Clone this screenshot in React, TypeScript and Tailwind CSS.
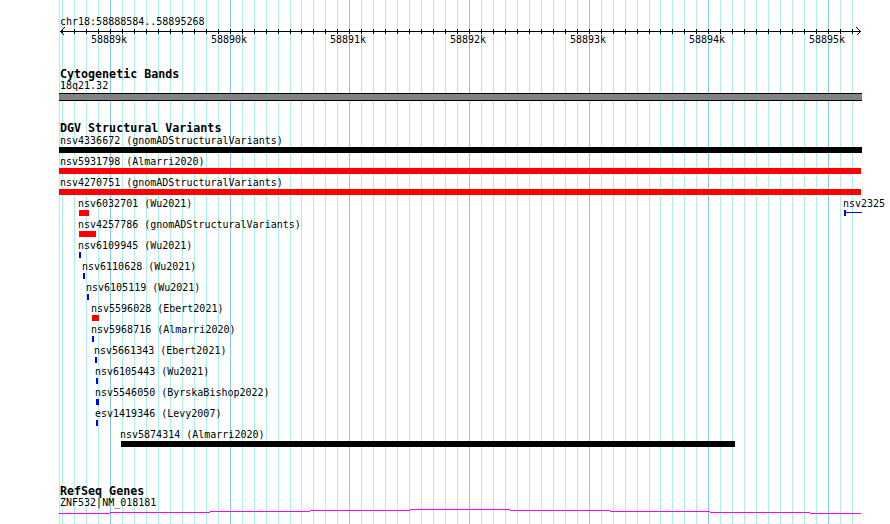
import React from "react";

// genome view: 58889k sits at x=110, one minor gridline every ~11.97px
const ORIGIN = 110;
const STEP = 11.967;

type Glyph = "red" | "blue" | "black" | "open";
type Feature = { x: number; w: number; glyph: Glyph; label: string };

const glyphClass: Record<Glyph, string> = {
  red: "bg-[#ff0000]",
  blue: "bg-[#0000ff]",
  black: "bg-black",
  open: "bg-[#0000ff]",
};

const variants: Feature[][] = [
  [{ x: 59, w: 803, glyph: "black", label: "nsv4336672 (gnomADStructuralVariants)" }],
  [{ x: 59, w: 802, glyph: "red", label: "nsv5931798 (Almarri2020)" }],
  [{ x: 59, w: 802, glyph: "red", label: "nsv4270751 (gnomADStructuralVariants)" }],
  [
    { x: 79, w: 10, glyph: "red", label: "nsv6032701 (Wu2021)" },
    { x: 844, w: 18, glyph: "open", label: "nsv2325" },
  ],
  [{ x: 79, w: 17, glyph: "red", label: "nsv4257786 (gnomADStructuralVariants)" }],
  [{ x: 79, w: 2, glyph: "blue", label: "nsv6109945 (Wu2021)" }],
  [{ x: 83, w: 2, glyph: "blue", label: "nsv6110628 (Wu2021)" }],
  [{ x: 87, w: 2, glyph: "blue", label: "nsv6105119 (Wu2021)" }],
  [{ x: 92, w: 7, glyph: "red", label: "nsv5596028 (Ebert2021)" }],
  [{ x: 92, w: 2, glyph: "blue", label: "nsv5968716 (Almarri2020)" }],
  [{ x: 95, w: 2, glyph: "blue", label: "nsv5661343 (Ebert2021)" }],
  [{ x: 96, w: 2, glyph: "blue", label: "nsv6105443 (Wu2021)" }],
  [{ x: 96, w: 3, glyph: "blue", label: "nsv5546050 (ByrskaBishop2022)" }],
  [{ x: 96, w: 2, glyph: "blue", label: "esv1419346 (Levy2007)" }],
  [{ x: 121, w: 614, glyph: "black", label: "nsv5874314 (Almarri2020)" }],
];

const gridKs = Array.from({ length: 67 }, (_, i) => i - 4);
const gx = (k: number) => Math.round(ORIGIN + STEP * k);

// gene model drawn as a slight arc, in steps of 100px
const geneSteps = [
  [59, 110, 5],
  [110, 210, 4],
  [210, 310, 3],
  [310, 410, 2],
  [410, 510, 1],
  [510, 610, 2],
  [610, 710, 3],
  [710, 810, 4],
  [810, 861, 5],
];

function GridLines() {
  return (
    <svg className="absolute inset-0 pointer-events-none" width={890} height={524} shapeRendering="crispEdges">
      <rect x={59} y={0} width={1} height={524} fill="#aeeeee" />
      {gridKs.map((k) => (
        <rect key={k} x={gx(k)} y={0} width={1} height={524} fill={k % 10 === 0 ? "#86c8ee" : "#aeeeee"} />
      ))}
    </svg>
  );
}

function Ruler() {
  return (
    <svg width={890} height={8} className="block" shapeRendering="crispEdges">
      <rect x={60} y={4} width={801} height={1} fill="#000" />
      {gridKs.map((k) => (
        <rect key={k} x={gx(k)} y={2} width={1} height={5} fill="#000" />
      ))}
      <polyline points="64.5,0.5 60.5,4.5 64.5,8.5" fill="none" stroke="#000" strokeWidth={1} />
      <polyline points="856.5,0.5 860.5,4.5 856.5,8.5" fill="none" stroke="#000" strokeWidth={1} />
    </svg>
  );
}

function VariantRow({ feats }: { feats: Feature[] }) {
  return (
    <div className="relative h-[21px]">
      {feats.map((f) => (
        <React.Fragment key={f.label}>
          <span
            className="absolute top-0 whitespace-nowrap text-[10px] leading-[10px] text-black"
            style={{ left: Math.max(60, f.x - 1) }}
          >
            {f.label}
          </span>
          {f.glyph === "open" ? (
            <div className="absolute top-[11px] h-[6px] flex items-start" style={{ left: f.x, width: f.w }}>
              <div className="w-[2px] h-[6px] bg-[#0000ff]" />
              <div className="flex-1 h-px mt-[2px] bg-[#0000ff]" />
            </div>
          ) : (
            <div
              className={`absolute top-[11px] h-[6px] ${glyphClass[f.glyph]}`}
              style={{ left: f.x, width: f.w }}
            />
          )}
        </React.Fragment>
      ))}
    </div>
  );
}

export default function App() {
  return (
    <div className="relative w-[890px] h-[524px] overflow-hidden bg-white text-black font-['DejaVu_Sans_Mono','Liberation_Mono',monospace]">
      <GridLines />

      <div className="relative">
        {/* location + ruler */}
        <div className="pt-[17px] pl-[60px] text-[10px] leading-[10px] h-[27px]">chr18:58888584..58895268</div>
        <Ruler />
        <div className="relative h-[10px] text-[10px] leading-[10px]">
          {[0, 1, 2, 3, 4, 5, 6].map((n) => (
            <span key={n} className="absolute top-0" style={{ left: gx(n * 10) - 19 }}>
              {58889 + n}k
            </span>
          ))}
        </div>

        {/* cytobands */}
        <div className="mt-[23px] pl-[60px] text-[11.67px] leading-[12px] font-bold">Cytogenetic Bands</div>
        <div className="mt-[1px] pl-[60px] text-[10px] leading-[10px]">18q21.32</div>
        <div className="mt-[2px] ml-[59px] w-[803px] h-[8px] border-y border-black bg-[#828282]" />

        {/* DGV */}
        <div className="mt-[21px] pl-[60px] text-[11.67px] leading-[12px] font-bold">DGV Structural Variants</div>
        <div className="mt-[2px]">
          {variants.map((feats, i) => (
            <VariantRow key={i} feats={feats} />
          ))}
        </div>

        {/* genes */}
        <div className="mt-[34px] pl-[60px] text-[11.67px] leading-[12px] font-bold">RefSeq Genes</div>
        <div className="mt-[1px] pl-[60px] text-[10px] leading-[10px]">ZNF532|NM_018181</div>
        <svg width={890} height={6} className="block" shapeRendering="crispEdges">
          {geneSteps.map(([a, b, y]) => (
            <rect key={a} x={a} y={y} width={b - a} height={1} fill="#ff00ff" />
          ))}
        </svg>
      </div>
    </div>
  );
}
